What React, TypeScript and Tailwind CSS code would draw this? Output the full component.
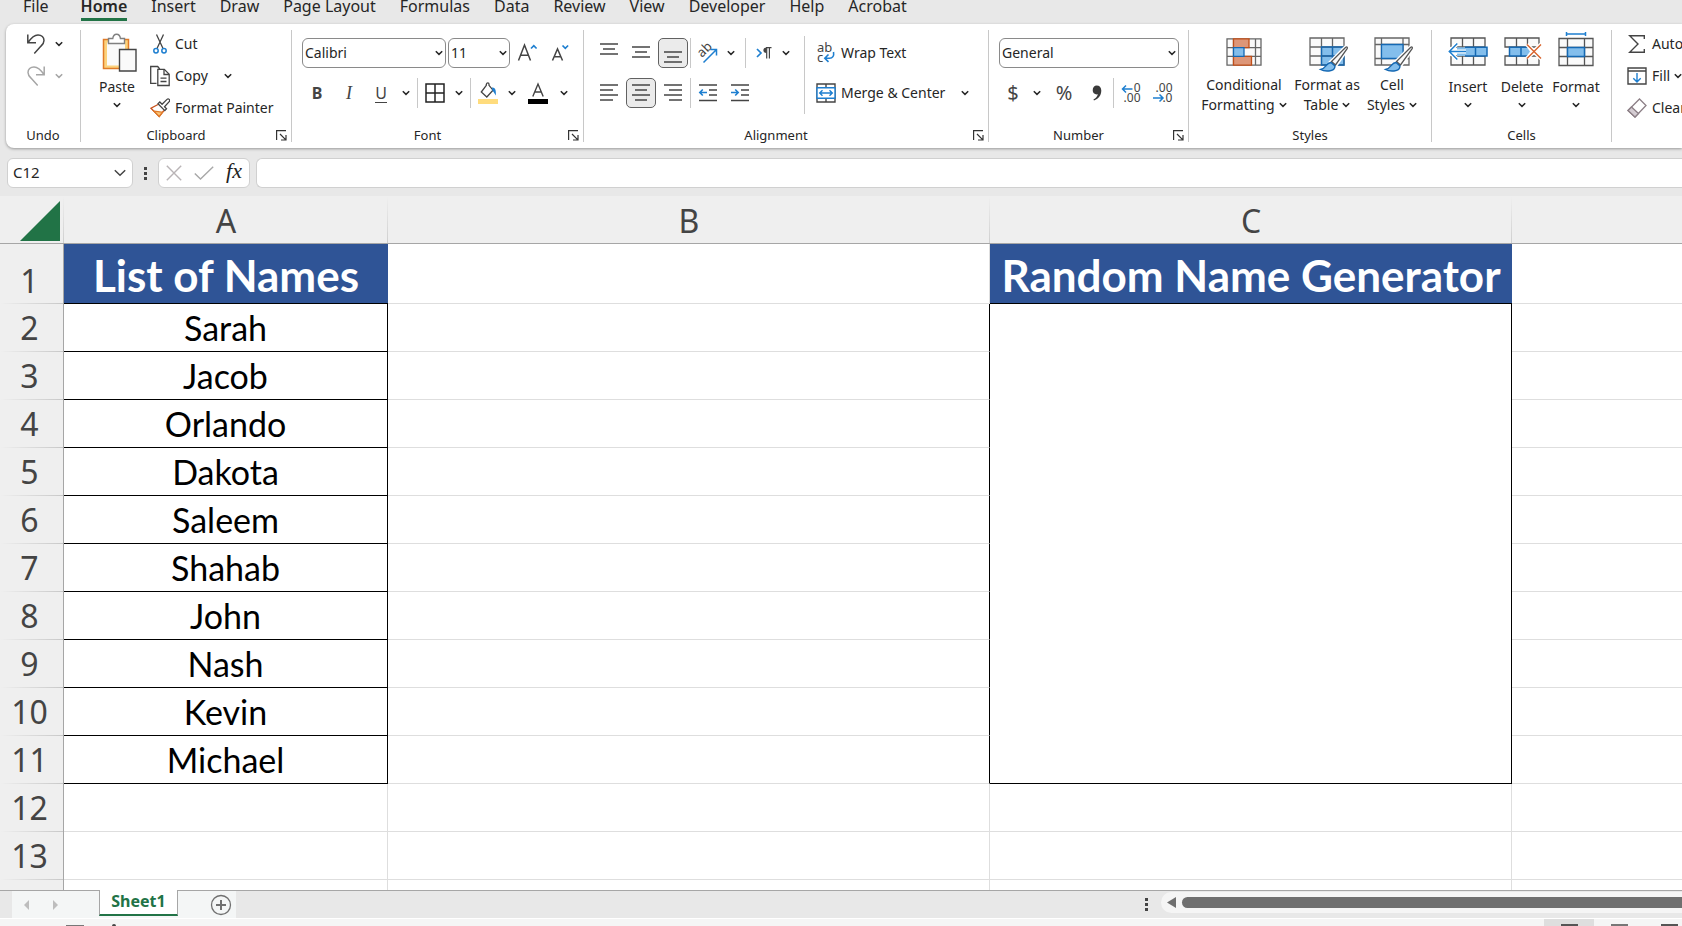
import { ReactNode } from "react";

const tabs = ["File", "Home", "Insert", "Draw", "Page Layout", "Formulas", "Data", "Review", "View", "Developer", "Help", "Acrobat"];
const names = ["Sarah", "Jacob", "Orlando", "Dakota", "Saleem", "Shahab", "John", "Nash", "Kevin", "Michael"];

const GRAY = "#444";
const BLUE = "#1e7fd0";

function Chevron({ className = "" }: { className?: string }) {
  return (
    <svg className={className} width="8" height="6" viewBox="0 0 8 6" fill="none" stroke="currentColor" strokeWidth="1.5">
      <path d="M.8 1.2 4 4.4 7.2 1.2" />
    </svg>
  );
}

function Drop({ label, className = "" }: { label: string; className?: string }) {
  return (
    <button aria-label={label} className={`flex h-[30px] w-4 shrink-0 items-center justify-center ${className}`}>
      <Chevron />
    </button>
  );
}

function Tool({ label, width = "w-[30px]", active, children }: { label: string; width?: string; active?: boolean; children: ReactNode }) {
  return (
    <button
      aria-label={label}
      className={`flex h-[30px] shrink-0 items-center justify-center rounded-[5px] ${width} ${active ? "border border-[#616161] bg-[#ebebeb]" : ""}`}
    >
      {children}
    </button>
  );
}

function Sep({ className = "" }: { className?: string }) {
  return <div className={`h-[30px] w-px shrink-0 bg-[#c8c8c8] ${className}`} />;
}

function Group({ title, width, launcher, children }: { title: string; width: string; launcher?: boolean; children: ReactNode }) {
  return (
    <>
      <section className={`flex shrink-0 flex-col ${width}`}>
        <div className="flex grow">{children}</div>
        <div className="mb-[3px] flex h-5 items-center">
          <span className="grow text-center text-[13px]">{title}</span>
          {launcher && (
            <button aria-label={`${title} settings`} className="flex w-5 justify-center">
              <svg width="11" height="11" viewBox="0 0 11 11" fill="none" stroke="#333" strokeWidth="1.2">
                <path d="M.6 10V.6H10M4 4l5.6 5.6M10 5v5H5" />
              </svg>
            </button>
          )}
        </div>
      </section>
      <div className="my-1.5 w-px shrink-0 bg-[#c8c8c8]" />
    </>
  );
}

function SmallButton({ icon, text, drop }: { icon: ReactNode; text: string; drop?: string }) {
  return (
    <div className="flex h-8 items-center">
      <button className="flex items-center gap-1 whitespace-nowrap px-1">
        <span className="flex w-[22px] justify-center">{icon}</span>
        {text}
      </button>
      {drop && <Drop label={drop} className="ml-2" />}
    </div>
  );
}

function BigButton({ icon, lines, width }: { icon: ReactNode; lines: string[]; width: string }) {
  return (
    <button className={`flex shrink-0 flex-col items-center whitespace-nowrap pt-2 leading-5 ${width}`}>
      <span className={`flex h-10 items-center ${lines[1] ? "mb-[3px]" : "mb-[5px]"}`}>{icon}</span>
      <span>{lines[0]}</span>
      {lines[1] ? (
        <span className="flex items-center gap-1">
          {lines[1]}
          <Chevron />
        </span>
      ) : (
        <Chevron className="mt-[5px]" />
      )}
    </button>
  );
}

function Picker({ label, value, width }: { label: string; value: string; width: string }) {
  return (
    <div className={`relative ${width}`}>
      <select aria-label={label} className="h-[30px] w-full appearance-none rounded-md border border-[#8a8a8a] bg-white px-0.5 text-sm">
        <option>{value}</option>
      </select>
      <Chevron className="pointer-events-none absolute right-[3px] top-3" />
    </div>
  );
}

function Lines({ rows, color = GRAY }: { rows: [number, number, number][]; color?: string }) {
  return (
    <svg width="20" height="22" viewBox="0 0 20 22" stroke={color} strokeWidth="1.4">
      {rows.map(([y, x1, x2]) => (
        <path key={y} d={`M${x1} ${y}H${x2}`} />
      ))}
    </svg>
  );
}

function UndoIcon({ redo }: { redo?: boolean }) {
  return (
    <svg width="20" height="22" viewBox="0 0 20 22" fill="none" stroke={redo ? "#a6a6a6" : GRAY} strokeWidth="1.5" className={redo ? "-scale-x-100" : ""}>
      <path d="M1.8 1.5v8.3H10M2 9.6C5 5 7.8 1.9 12 1.9c3.7 0 6 2.6 6 5.5 0 2.400-1.200 3.900-3 5.700L8.300 20.500" />
    </svg>
  );
}

function PasteIcon() {
  return (
    <svg width="42" height="42" viewBox="-6 -2 42 42" fill="none">
      <path d="M1.500 6.500h25v29h-25z" fill="#fcd27c" stroke="#e07b28" strokeWidth="1.500" />
      <path d="M5 9.500h18v23H5z" fill="#fafafa" />
      <path d="M6.500 10.500v-5h4.300c.3-2.600 1.900-4.200 3.800-4.200s3.500 1.600 3.800 4.200h4.100v5z" fill="#fff" stroke="#808080" strokeWidth="1.400" />
      <path d="M17.500 16.500h16.500v21.500h-16.500z" fill="#fafafa" stroke="#444" strokeWidth="1.400" />
    </svg>
  );
}

function CutIcon() {
  return (
    <svg width="16" height="22" viewBox="0 0 16 22" fill="none" strokeWidth="1.300">
      <path d="M4.500 1.500 11 15.500M11.500 1.500 5 15.500" stroke={GRAY} />
      <circle cx="4" cy="17.800" r="2.200" stroke={BLUE} strokeWidth="1.500" />
      <circle cx="12" cy="17.800" r="2.200" stroke={BLUE} strokeWidth="1.500" />
    </svg>
  );
}

function CopyIcon() {
  return (
    <svg width="20" height="22" viewBox="0 0 20 22" fill="none" stroke={GRAY} strokeWidth="1.300">
      <path d="M6.500 18.300H.7V1.500h7l2 2.500" />
      <path d="M7.800 4.300h6.500l4.900 4.900v11.300H7.800z" />
      <path d="M14 4.500v5h5M10.500 13.200h6M10.500 16.500h6" />
    </svg>
  );
}

function PainterIcon() {
  return (
    <svg width="20" height="20" viewBox="0 0 20 20" fill="none" strokeWidth="1.300">
      <path d="M8 6.500 1 10.300 9.200 18.500l4.700-6" fill="#fff" stroke="#c8511b" />
      <path d="m4 13.200 5.200 5.300 3.300-4.300z" fill="#fcc678" stroke="#e07b28" />
      <path d="m8 5.800 6.800 6.800 1.700-1.800-2-2 4.700-5.200a1.500 1.500 0 0 0-2.200-2.200l-4.900 4.900L9.800 4z" fill="#fff" stroke={GRAY} />
    </svg>
  );
}

function SizeIcon({ down }: { down?: boolean }) {
  return (
    <svg width="22" height="24" viewBox="0 0 22 24" fill="none" strokeWidth="1.500">
      <path d={down ? "M4.500 19.500 9.500 8l5 11.500M6.200 15.800h6.600" : "M2.500 19.500 8.500 4l6 15.500M4.600 14.300h7.800"} stroke={GRAY} />
      <path d={down ? "m14.500 4.500 2.800 2.800L20.100 4.500" : "m15 7.500 2.800-2.800L20.600 7.500"} stroke={BLUE} strokeWidth="1.700" />
    </svg>
  );
}

function BordersIcon() {
  return (
    <svg width="20" height="20" viewBox="0 0 20 20" fill="none" stroke="#222" strokeWidth="1.500">
      <path d="M1 1h18v18H1zM10 1v18M1 10h18" />
    </svg>
  );
}

function FillColorIcon() {
  return (
    <svg width="20" height="22" viewBox="0 0 20 22" fill="none">
      <path d="M8.300 3.300 3.300 10l5.500 5 6.200-6.800-4-4.900V2.300c0-1.800-2.200-1.800-2.700 0z" stroke={GRAY} strokeWidth="1.300" />
      <path d="M14 5.500c3-.5 4.300 2.500 3.800 8-1.200-1.500-1.700-3.500-3.500-5z" fill={BLUE} />
      <path d="M0 17h20v5H0z" fill="#ffdc7d" />
    </svg>
  );
}

function FontColorIcon() {
  return (
    <svg width="20" height="22" viewBox="0 0 20 22" fill="none">
      <path d="M4.800 14.500 10 2l5.200 12.500M6.700 10h6.600" stroke={GRAY} strokeWidth="1.400" />
      <path d="M0 17h20v5H0z" fill="#000" />
    </svg>
  );
}

function OrientIcon() {
  return (
    <svg width="22" height="22" viewBox="0 0 22 22" fill="none">
      <text x="0" y="0" transform="translate(6 16) rotate(-45)" fontSize="13" fill={GRAY}>ab</text>
      <path d="m7.500 20.500 12.500-12.500M14.500 7.500h6v6" stroke={BLUE} strokeWidth="1.500" />
    </svg>
  );
}

function IndentIcon({ right }: { right?: boolean }) {
  return (
    <svg width="20" height="22" viewBox="0 0 20 22" fill="none" strokeWidth="1.400">
      <path d="M1 3h18M11 8h8M11 13h8M1 18.500h18" stroke={GRAY} />
      <path d={right ? "M1 10.500h7M5.200 7.500l3 3-3 3" : "M9 10.500H2M4.800 7.500l-3 3 3 3"} stroke={BLUE} strokeWidth="1.600" />
    </svg>
  );
}

function DirectionIcon() {
  return (
    <svg width="16" height="14" viewBox="0 0 16 14" fill="none">
      <path d="m1 3 4 4-4 4" stroke={BLUE} strokeWidth="1.700" />
      <path d="M10.500 1.500c-4.200 0-4.200 5.500 0 5.500z" fill={GRAY} />
      <path d="M15.500 1.700H10M10.700 1.700V12.500M13.400 1.700V12.500" stroke={GRAY} strokeWidth="1.200" />
    </svg>
  );
}

function WrapIcon() {
  return (
    <svg width="20" height="24" viewBox="0 0 20 24" fill="none">
      <text x="1" y="11" fontSize="13" fill={GRAY}>ab</text>
      <text x="1" y="20.500" fontSize="13" fill={GRAY}>c</text>
      <path d="M17.500 11c.8 4-1 6.200-4 6.200H9.500M12.500 13.500l-3.700 3.700 3.700 3.700" stroke={BLUE} strokeWidth="1.600" />
    </svg>
  );
}

function MergeIcon() {
  return (
    <svg width="20" height="20" viewBox="0 0 20 20" fill="none" strokeWidth="1.400">
      <path d="M1 1h18v18H1zM10 1v4M10 15v4" stroke={GRAY} />
      <path d="M1 4.800h18v10.400H1z" fill="#fff" stroke={BLUE} />
      <path d="M4 10h12M6.500 7.200 3.700 10l2.800 2.800M13.500 7.200l2.800 2.800-2.800 2.800" stroke={BLUE} />
    </svg>
  );
}

function DecimalIcon({ less }: { less?: boolean }) {
  return (
    <svg width="22" height="22" viewBox="0 0 22 22" fill="none">
      <text x="20.500" y="10" fontSize="12" textAnchor="end" fill={GRAY}>{less ? ".00" : "0"}</text>
      <text x="20.500" y="20" fontSize="12" textAnchor="end" fill={GRAY}>{less ? ".0" : ".00"}</text>
      <path d={less ? "M1 16h10M7.500 12.500 11 16l-3.500 3.500" : "M12.500 7h-10M6 3.500 2.500 7 6 10.500"} stroke={BLUE} strokeWidth="1.500" />
    </svg>
  );
}

function CondIcon() {
  return (
    <svg width="36" height="28" viewBox="0 0 36 28" fill="none" strokeWidth="1.300">
      <path d="M1 .8h34v26.400H1zM1 9.600h34M1 18.400h34M7.500.8v26.400M29.500.8v26.400" fill="#fafafa" stroke="#666" />
      <path d="M7.500.8h15.500v8.800H7.500zM7.500 18.400H25.500v8.800H7.500z" fill="#dd9678" stroke="#c04f1a" />
      <path d="M7.500 9.600H18v8.800H7.500z" fill="#83beec" stroke="#1468b3" />
    </svg>
  );
}

function Brush() {
  return (
    <>
      <path d="M36.500 10.500c1.500-1.300 2.500 0 1.500 1.500L26.500 28.500l-4.700-3.300z" fill="#fafafa" stroke="#fff" strokeWidth="4" />
      <path d="M36.500 10.500c1.500-1.300 2.500 0 1.500 1.500L26.500 28l-4-3.500z" fill="#fafafa" stroke="#555" strokeWidth="1.300" />
      <path d="M22 25.500c-5 0-4 5.500-10.500 7 3.500 2 14.500 3 14.500-3.500z" fill="#83beec" stroke="#1468b3" strokeWidth="1.400" />
    </>
  );
}

function TableIcon() {
  return (
    <svg width="44" height="40" viewBox="-4 -5 44 40" fill="none" strokeWidth="1.300">
      <path d="M1 1h34v27H1z" fill="#fafafa" />
      <path d="M12.500 10H35v18H12.500z" fill="#83beec" />
      <path d="M1 1h34v27H1zM1 10h34M1 19h34M12.500 1v27M23.500 1v27" stroke="#666" />
      <path d="M35 28H12.500V10H35zM12.500 19H35M23.500 10v18" stroke="#1468b3" />
      <Brush />
    </svg>
  );
}

function CellStyleIcon() {
  return (
    <svg width="44" height="40" viewBox="-4 -5 44 40" fill="none" strokeWidth="1.300">
      <path d="M1 1h34v27H1zM1 7.500h34M1 21.500h34M7.500 1v27M29 1v27" fill="#fafafa" stroke="#666" />
      <path d="M7.500 7.500H29v14H7.500z" fill="#83beec" stroke="#1468b3" />
      <Brush />
    </svg>
  );
}

function InsertIcon() {
  return (
    <svg width="40" height="30" viewBox="0 0 40 30" fill="none" strokeWidth="1.300">
      <path d="M3 10V1h34v9M3 19v9h34v-9M14.500 1v27M25.500 1v27M3 10h34M3 19h34" fill="#fafafa" stroke="#555" />
      <path d="M9 10.200h30v8.800H9z" fill="#83beec" />
      <path d="M17 10.200h22v8.800H17M27.500 10.200v8.800" stroke="#1468b3" strokeWidth="1.500" />
      <path d="M18 14.500H1.500M9.300 6.500l-8 8 8 8" stroke="#fff" strokeWidth="4" />
      <path d="M18 14.500H1.500M9.300 6.500l-8 8 8 8" stroke={BLUE} strokeWidth="1.500" />
    </svg>
  );
}

function DeleteIcon() {
  return (
    <svg width="40" height="30" viewBox="0 0 40 30" fill="none" strokeWidth="1.300">
      <path d="M3 10V1h34v9zM3 19v9h34v-9zM14.500 1v9M25.500 1v9M14.500 19v9M25.500 19v9" fill="#fafafa" stroke="#555" />
      <path d="M7.500 10.200H25l3 4.300-3 4.500H7.500z" fill="#83beec" />
      <path d="M25 10.200H7.500v8.800H25M19 10.200v8.800" stroke="#1468b3" strokeWidth="1.500" />
      <path d="m25 7.500 14 14M39 7.500l-14 14" stroke="#fff" strokeWidth="4" />
      <path d="m25 7.500 14 14M39 7.500l-14 14" stroke="#d9622b" strokeWidth="1.400" />
    </svg>
  );
}

function FormatIcon() {
  return (
    <svg width="36" height="40" viewBox="0 0 36 40" fill="none" strokeWidth="1.300">
      <path d="M1 6.500h34v27H1zM1 15.500h34M1 24.500h34M9.500 6.500v27M26.500 6.500v27" fill="#fafafa" stroke="#555" />
      <path d="M9.500 15.500h17v9h-17z" fill="#83beec" stroke="#1468b3" strokeWidth="1.500" />
      <path d="M8.500 2h19M8.500 0v4M27.500 0v4" stroke={BLUE} strokeWidth="1.500" />
    </svg>
  );
}

function SumIcon() {
  return (
    <svg width="18" height="20" viewBox="0 0 18 20" fill="none" stroke={GRAY} strokeWidth="1.400">
      <path d="M16.300 5V1.700H1.700L10 10l-8.300 8.300h14.600V15" />
    </svg>
  );
}

function FillIcon() {
  return (
    <svg width="20" height="18" viewBox="0 0 20 18" fill="none" strokeWidth="1.400">
      <path d="M1 1h18v16H1zM1 4h18" stroke={GRAY} />
      <path d="M10 6v9M6.300 11.200 10 15l3.700-3.800" stroke={BLUE} />
    </svg>
  );
}

function EraserIcon() {
  return (
    <svg width="20" height="20" viewBox="0 0 20 20" fill="none" stroke="#8c7f86" strokeWidth="1.300">
      <path d="M12.500 1 19 7.500 8 19 1 12.500z" fill="#fff" />
      <path d="m4.500 9 7 6.500L8 19l-7-6.500z" fill="#d4ccd2" />
    </svg>
  );
}

function Ribbon() {
  return (
    <div className="ml-1.5 flex h-[124px] shrink-0 overflow-hidden rounded-l-lg bg-white shadow-[0_1px_3px_rgba(0,0,0,0.35)]">
      <Group title="Undo" width="w-[74px]">
        <div className="pl-[15px] pt-1">
          <div className="flex h-8 items-center">
            <Tool label="Undo"><UndoIcon /></Tool>
            <Drop label="Undo history" />
          </div>
          <div className="flex h-8 items-center text-[#a6a6a6]">
            <Tool label="Redo"><UndoIcon redo /></Tool>
            <Drop label="Redo history" />
          </div>
        </div>
      </Group>

      <Group title="Clipboard" width="w-[210px]" launcher>
        <div className="flex pl-2.5">
          <BigButton icon={<PasteIcon />} lines={["Paste"]} width="w-[52px]" />
          <div className="pl-0.5 pt-1">
            <SmallButton icon={<CutIcon />} text="Cut" />
            <SmallButton icon={<CopyIcon />} text="Copy" drop="Copy options" />
            <SmallButton icon={<PainterIcon />} text="Format Painter" />
          </div>
        </div>
      </Group>

      <Group title="Font" width="w-[291px]" launcher>
        <div className="flex flex-col gap-2.5 pl-2.5 pt-3.5">
          <div className="flex gap-0.5">
            <Picker label="Font name" value="Calibri" width="w-36" />
            <Picker label="Font size" value="11" width="w-[62px]" />
            <Tool label="Increase font size"><SizeIcon /></Tool>
            <Tool label="Decrease font size"><SizeIcon down /></Tool>
          </div>
          <div className="flex gap-0.5">
            <Tool label="Bold"><span className="text-base font-bold text-[#444]">B</span></Tool>
            <Tool label="Italic"><span className="font-['Liberation_Serif',serif] text-lg italic text-[#444]">I</span></Tool>
            <Tool label="Underline"><span className="border-b border-[#444] text-base leading-[18px] text-[#444]">U</span></Tool>
            <Drop label="Underline styles" />
            <Sep className="mx-px" />
            <Tool label="Borders" width="w-7"><BordersIcon /></Tool>
            <Drop label="Border styles" />
            <Sep className="mx-px" />
            <Tool label="Fill color" width="w-7"><FillColorIcon /></Tool>
            <Drop label="Fill colors" />
            <Tool label="Font color" width="w-8"><FontColorIcon /></Tool>
            <Drop label="Font colors" />
          </div>
        </div>
      </Group>

      <Group title="Alignment" width="w-[404px]" launcher>
        <div className="flex pl-2.5">
          <div className="flex flex-col gap-2.5 pr-2.5 pt-3.5">
            <div className="flex gap-0.5">
              <Tool label="Top align"><Lines rows={[[2, 1, 19], [7, 4, 16], [12, 1, 19]]} /></Tool>
              <Tool label="Middle align"><Lines rows={[[5, 1, 19], [10, 4, 16], [15, 1, 19]]} /></Tool>
              <Tool label="Bottom align" active><Lines rows={[[10, 1, 19], [15, 4, 16], [20, 1, 19]]} /></Tool>
              <Sep />
              <Tool label="Orientation" width="w-7"><OrientIcon /></Tool>
              <Drop label="Orientation options" />
              <Sep className="mx-1" />
              <Tool label="Text direction" width="w-6"><DirectionIcon /></Tool>
              <Drop label="Direction options" />
            </div>
            <div className="flex gap-0.5">
              <Tool label="Align left"><Lines rows={[[3, 1, 19], [8, 1, 14], [13, 1, 19], [18, 1, 14]]} /></Tool>
              <Tool label="Center" active><Lines rows={[[3, 1, 19], [8, 4, 16], [13, 1, 19], [18, 4, 16]]} /></Tool>
              <Tool label="Align right"><Lines rows={[[3, 1, 19], [8, 6, 19], [13, 1, 19], [18, 6, 19]]} /></Tool>
              <Sep />
              <Tool label="Decrease indent"><IndentIcon /></Tool>
              <Tool label="Increase indent"><IndentIcon right /></Tool>
            </div>
          </div>
          <div className="mt-3 h-[78px] w-px bg-[#c8c8c8]" />
          <div className="flex flex-col gap-2 pl-1.5 pt-[13px]">
            <SmallButton icon={<WrapIcon />} text="Wrap Text" />
            <SmallButton icon={<MergeIcon />} text="Merge & Center" drop="Merge options" />
          </div>
        </div>
      </Group>

      <Group title="Number" width="w-[199px]" launcher>
        <div className="flex flex-col gap-2.5 pl-2.5 pt-3.5">
          <Picker label="Number format" value="General" width="w-[180px]" />
          <div className="flex gap-0.5">
            <Tool label="Accounting format" width="w-7"><span className="text-xl text-[#444]">$</span></Tool>
            <Drop label="Currencies" />
            <Tool label="Percent style" width="w-[34px]"><span className="text-xl text-[#444]">%</span></Tool>
            <Tool label="Comma style" width="w-7">
              <svg width="10" height="16" viewBox="0 0 10 16" fill="#3a3a3a">
                <path d="M4.700.5c2.700 0 4.600 1.900 4.600 5 0 5-3 8.500-7.300 10l-.6-1c2.500-1.300 4-3 4.400-5.200-2.900.6-5.100-1.200-5.100-4C.7 2.500 2.500.5 4.700.5z" />
              </svg>
            </Tool>
            <Sep />
            <Tool label="Increase decimal"><DecimalIcon /></Tool>
            <Tool label="Decrease decimal"><DecimalIcon less /></Tool>
          </div>
        </div>
      </Group>

      <Group title="Styles" width="w-[242px]">
        <div className="flex gap-0.5 pl-2.5">
          <BigButton icon={<CondIcon />} lines={["Conditional", "Formatting"]} width="w-[90px]" />
          <BigButton icon={<TableIcon />} lines={["Format as", "Table"]} width="w-[72px]" />
          <BigButton icon={<CellStyleIcon />} lines={["Cell", "Styles"]} width="w-[54px]" />
        </div>
      </Group>

      <Group title="Cells" width="w-[179px]">
        <div className="flex gap-0.5 pl-2.5">
          <BigButton icon={<InsertIcon />} lines={["Insert"]} width="w-[52px]" />
          <BigButton icon={<DeleteIcon />} lines={["Delete"]} width="w-[52px]" />
          <BigButton icon={<FormatIcon />} lines={["Format"]} width="w-[52px]" />
        </div>
      </Group>

      <div className="shrink-0 pl-2.5 pt-1">
        <SmallButton icon={<SumIcon />} text="AutoSum" drop="AutoSum options" />
        <div className="flex h-8 items-center">
          <button className="flex items-center gap-1 px-1">
            <span className="flex w-[22px] justify-center"><FillIcon /></span>
            Fill
            <Chevron />
          </button>
        </div>
        <SmallButton icon={<EraserIcon />} text="Clear" drop="Clear options" />
      </div>
    </div>
  );
}

function FormulaBar() {
  return (
    <div className="flex h-12 shrink-0 items-center pl-[7px] pt-0.5">
      <div className="flex h-[30px] w-[126px] items-center rounded-md border border-[#d0d0d0] bg-white pr-1.5">
        <input aria-label="Name box" defaultValue="C12" className="w-0 grow bg-transparent pl-[5px] text-[15px] outline-none" />
        <button aria-label="Named ranges">
          <svg width="12" height="8" viewBox="0 0 12 8" fill="none" stroke={GRAY} strokeWidth="1.500">
            <path d="m.8 1.200 5.200 5 5.200-5" />
          </svg>
        </button>
      </div>
      <div className="flex w-[25px] flex-col items-center gap-0.5">
        <i className="size-[3px] bg-[#444]" />
        <i className="size-[3px] bg-[#444]" />
        <i className="size-[3px] bg-[#444]" />
      </div>
      <div className="flex h-[30px] w-[92px] items-center justify-between rounded-md border border-[#d0d0d0] bg-white px-[7px]">
        <button aria-label="Cancel">
          <svg width="16" height="16" viewBox="0 0 16 16" stroke="#b9b4b6" strokeWidth="1.400"><path d="m.8.8 14.400 14.400M15.200.8.8 15.200" /></svg>
        </button>
        <button aria-label="Enter">
          <svg width="20" height="14" viewBox="0 0 20 14" fill="none" stroke="#a8a8a8" strokeWidth="1.400"><path d="m.8 7.500 5.700 5.500L19.200.8" /></svg>
        </button>
        <button className="pb-1 font-['Liberation_Serif',serif] text-[22px] italic leading-6 text-[#222]">fx</button>
      </div>
      <input aria-label="Formula bar" className="ml-1.5 h-[30px] grow rounded-l-md border border-r-0 border-[#d0d0d0] bg-white px-2 outline-none" />
    </div>
  );
}

const colHead = "h-12 border-b border-[#a6a6a6] bg-[linear-gradient(to_bottom,#efefef,#cfcfcf)] bg-[length:1px_100%] bg-right bg-no-repeat p-0 pt-0.5 text-[32px] font-normal leading-10 text-[#444]";
const rowHead = "border-r border-[#a6a6a6] bg-[#efefef] bg-[linear-gradient(to_right,#efefef,#c8c8c8)] bg-[length:100%_1px] bg-bottom bg-no-repeat p-0 pr-1 text-[32px] font-normal leading-[44px] text-[#444]";
const plain = "border-b border-r border-[#dedede] p-0";
const edge = "border-b border-[#dedede] p-0";
const boxed = "border-b border-r border-black p-0";
const title = "whitespace-nowrap border-b border-black bg-[#2f5496] p-0 pt-1 text-[44px] font-bold leading-[55px] text-white";

function Sheet() {
  return (
    <div className="min-h-0 grow overflow-hidden bg-white">
      <table className="w-full table-fixed border-separate border-spacing-0 text-center">
        <colgroup>
          <col className="w-16" />
          <col className="w-[324px]" />
          <col className="w-[602px]" />
          <col className="w-[522px]" />
          <col />
        </colgroup>
        <thead className="bg-[#efefef]">
          <tr>
            <th className={colHead}>
              <button aria-label="Select all" className="ml-auto mr-1 block">
                <svg width="40" height="40" viewBox="0 0 40 40"><path d="M40 0v40H0z" fill="#217346" /></svg>
              </button>
            </th>
            <th className={colHead}>A</th>
            <th className={colHead}>B</th>
            <th className={colHead}>C</th>
            <th className="h-12 border-b border-[#a6a6a6] p-0"></th>
          </tr>
        </thead>
        <tbody>
          <tr className="h-[60px]">
            <th className={`${rowHead} pt-3.5`}>1</th>
            <td className={`${title} font-[Lato,sans-serif]`}>List of Names</td>
            <td className={plain}></td>
            <td className={`${title} font-[Lato,sans-serif]`}>Random Name Generator</td>
            <td className={edge}></td>
          </tr>
          {names.map((name, i) => (
            <tr key={name} className="h-12">
              <th className={rowHead}>{i + 2}</th>
              <td className={`${boxed} font-[Lato,sans-serif] text-[34px] leading-[44px] text-black`}>{name}</td>
              <td className="border-b border-r border-b-[#dedede] border-r-black p-0"></td>
              {i === 0 && <td rowSpan={names.length} className={boxed}></td>}
              <td className={edge}></td>
            </tr>
          ))}
          {["12", "13", ""].map((n) => (
            <tr key={n} className="h-12">
              <th className={rowHead}>{n}</th>
              <td className={plain}></td>
              <td className={plain}></td>
              <td className={plain}></td>
              <td className={edge}></td>
            </tr>
          ))}
        </tbody>
      </table>
    </div>
  );
}

function SheetBar() {
  return (
    <div className="flex h-[29px] shrink-0 border-b border-white bg-[#e8e8e8]">
      <div className="w-3 border-t border-[#a6a6a6]" />
      <div className="flex bg-[#f4f6f6]">
        <div className="flex w-[87px] items-center gap-6 border-t border-[#a6a6a6] pl-3">
          <button aria-label="Previous sheet">
            <svg width="5" height="10" viewBox="0 0 5 10" fill="#bdbdbd"><path d="M5 0v10L0 5z" /></svg>
          </button>
          <button aria-label="Next sheet">
            <svg width="5" height="10" viewBox="0 0 5 10" fill="#bdbdbd"><path d="M0 0v10l5-5z" /></svg>
          </button>
        </div>
        <button className="mb-0.5 w-[79px] border-x border-b-2 border-x-[#a6a6a6] border-b-[#217346] bg-white pb-0.5 text-base font-bold leading-5 text-[#217346]">
          Sheet1
        </button>
        <div className="flex w-[58px] items-center border-t border-[#a6a6a6] pl-8">
          <button aria-label="New sheet">
            <svg width="22" height="22" viewBox="0 0 22 22" fill="none" stroke="#707070" strokeWidth="1.300">
              <circle cx="11" cy="11" r="9.500" />
              <path d="M11 6v10M6 11h10" strokeWidth="2" />
            </svg>
          </button>
        </div>
      </div>
      <div className="flex grow items-center justify-end border-t border-[#a6a6a6]">
        <div className="mr-[13px] flex flex-col gap-0.5">
          <i className="size-[3px] bg-[#444]" />
          <i className="size-[3px] bg-[#444]" />
          <i className="size-[3px] bg-[#444]" />
        </div>
        <div className="mb-1 flex h-[21px] w-[521px] items-center gap-1.5 rounded-l-full bg-[#f5f5f5] pl-1.5">
          <svg width="9" height="11" viewBox="0 0 9 11" fill="#6f6f6f"><path d="M9 0v11L0 5.500z" /></svg>
          <div className="h-[11px] grow rounded-l-full bg-[#6f6f6f]" />
        </div>
      </div>
    </div>
  );
}

function StatusBar() {
  return (
    <div className="flex h-[7px] shrink-0 items-end overflow-hidden bg-[#f5f5f5]">
      <div className="ml-[66px] h-px w-[18px] bg-[#777]" />
      <div className="ml-7 h-0.5 w-1 rounded-t bg-[#444]" />
      <div className="ml-auto flex h-full items-end">
        <div className="flex h-full w-[50px] items-end justify-center bg-[#dedede]"><div className="h-0.5 w-[17px] bg-[#555]" /></div>
        <div className="flex h-full w-[50px] items-end justify-center"><div className="h-0.5 w-[17px] bg-[#777]" /></div>
        <div className="mr-[-12px] flex h-full w-[50px] items-end justify-center"><div className="h-0.5 w-[17px] bg-[#555]" /></div>
      </div>
    </div>
  );
}

export default function App() {
  return (
    <div className="flex h-screen flex-col overflow-hidden bg-[#e8e8e8] font-['Noto_Sans',sans-serif] text-sm text-[#262626]">
      <nav className="flex h-6 shrink-0 items-start gap-6 overflow-hidden pl-[23px]">
        {tabs.map((tab) => (
          <a
            key={tab}
            href="#"
            className={`-mt-1 whitespace-nowrap border-b-[3px] pb-0.5 text-base leading-5 ${tab === "Home" ? "ml-2 border-[#217346] font-semibold" : "border-transparent"}`}
          >
            {tab}
          </a>
        ))}
      </nav>
      <Ribbon />
      <FormulaBar />
      <Sheet />
      <SheetBar />
      <StatusBar />
    </div>
  );
}
